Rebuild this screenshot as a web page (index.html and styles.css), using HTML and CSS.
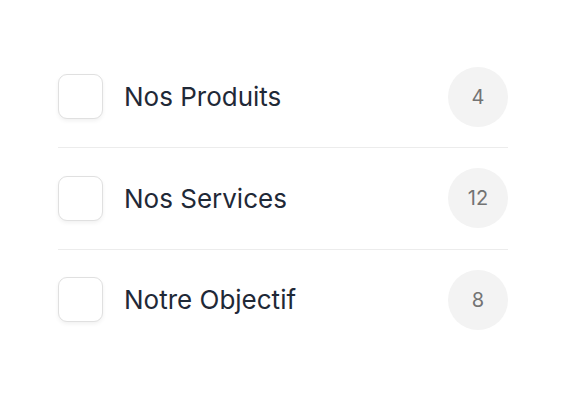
FILE: index.html
```html
<!DOCTYPE html>
<html>
<head>
<meta charset="utf-8">
<link rel="stylesheet" href="styles.css">
</head>
<body>
<ul class="list">
  <li class="row">
    <span class="check"></span>
    <span class="label">Nos Produits</span>
    <span class="badge">4</span>
  </li>
  <li class="row">
    <span class="check"></span>
    <span class="label">Nos Services</span>
    <span class="badge">12</span>
  </li>
  <li class="row">
    <span class="check"></span>
    <span class="label">Notre Objectif</span>
    <span class="badge">8</span>
  </li>
</ul>
</body>
</html>
```
FILE: styles.css
```css
html, body {
  margin: 0;
  padding: 0;
  background: #ffffff;
}
body {
  font-family: Inter, "Noto Sans", sans-serif;
  width: 564px;
  height: 400px;
}
.list {
  list-style: none;
  margin: 0;
  padding: 46.5px 0 0 58px;
  width: 450px;
}
.row {
  display: flex;
  align-items: center;
  padding: 20px 0 20.5px;
  border-bottom: 1px solid #ececec;
}
.row:last-child {
  border-bottom: none;
}
.check {
  width: 45px;
  height: 45px;
  box-sizing: border-box;
  border: 1.5px solid #e0e0e0;
  border-radius: 9px;
  background: #fff;
  box-shadow: 0 2px 4px rgba(0,0,0,0.06);
  flex: none;
}
.label {
  margin-left: 21px;
  font-size: 26px;
  font-weight: 400;
  color: #1f2937;
  flex: 1;
}
.badge {
  width: 60px;
  height: 60px;
  border-radius: 50%;
  background: #f3f3f3;
  color: #737373;
  font-size: 20px;
  display: flex;
  align-items: center;
  justify-content: center;
  flex: none;
}
```
